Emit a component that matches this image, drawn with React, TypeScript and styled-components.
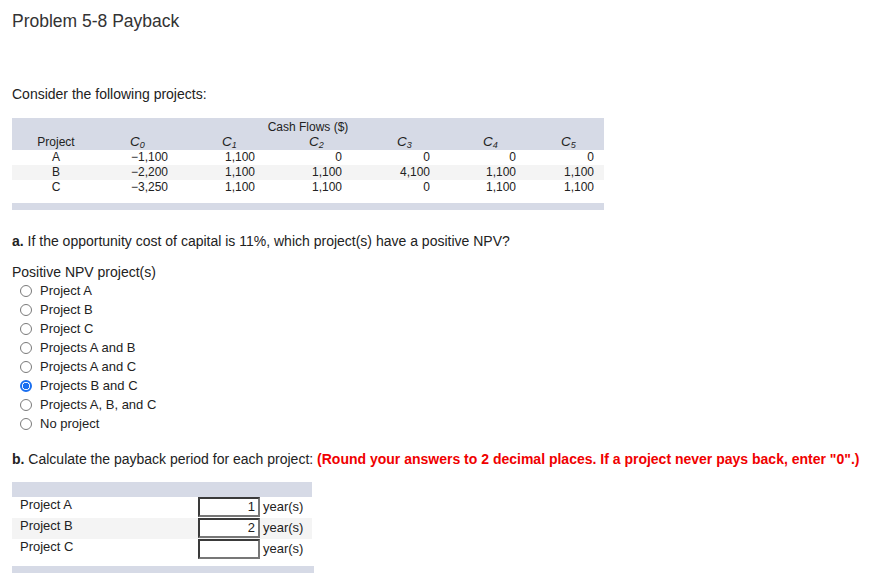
import React, { FC } from "react";
import styled, { createGlobalStyle } from "styled-components";

// Types
type Flow = { project: string; values: string[] };

// Local Data
const flows: Flow[] = [
  { project: "A", values: ["\u22121,100", "1,100", "0", "0", "0", "0"] },
  { project: "B", values: ["\u22122,200", "1,100", "1,100", "4,100", "1,100", "1,100"] },
  { project: "C", values: ["\u22123,250", "1,100", "1,100", "0", "1,100", "1,100"] },
];

const options = [
  "Project A",
  "Project B",
  "Project C",
  "Projects A and B",
  "Projects A and C",
  "Projects B and C",
  "Projects A, B, and C",
  "No project",
];

const paybacks = [
  { label: "Project A", value: "1" },
  { label: "Project B", value: "2" },
  { label: "Project C", value: "" },
];

const App: FC = () => {
  return (
    <Page>
      <GlobalStyle />
      <Title>Problem 5-8 Payback</Title>
      <Intro>Consider the following projects:</Intro>

      <FlowTable>
        <BandCell $span>Cash Flows ($)</BandCell>
        <BandCell $center>Project</BandCell>
        {[0, 1, 2, 3, 4, 5].map((n) => (
          <BandCell key={n}>
            <HeadInner $wide={n === 0}>
              <i>C</i>
              <Sub>{n}</Sub>
            </HeadInner>
          </BandCell>
        ))}
        <BandCell />
        {flows.map((row, i) => (
          <React.Fragment key={row.project}>
            <DataCell $center $shade={i === 1}>
              {row.project}
            </DataCell>
            {row.values.map((v, j) => (
              <DataCell key={j} $shade={i === 1}>
                {v}
              </DataCell>
            ))}
            <DataCell $shade={i === 1} />
          </React.Fragment>
        ))}
      </FlowTable>
      <Bar $width={592} $gap={8} />

      <Question>
        <b>a.</b> If the opportunity cost of capital is 11%, which project(s) have a positive NPV?
      </Question>

      <GroupLabel>Positive NPV project(s)</GroupLabel>
      <RadioList>
        {options.map((o) => (
          <RadioRow key={o}>
            <Radio $checked={o === "Projects B and C"} />
            {o}
          </RadioRow>
        ))}
      </RadioList>

      <Question $top={18}>
        <b>b.</b> Calculate the payback period for each project:{" "}
        <Warn>(Round your answers to 2 decimal places. If a project never pays back, enter "0".)</Warn>
      </Question>

      <PaybackTable>
        <PaybackHead />
        {paybacks.map((p, i) => (
          <PaybackRow key={p.label} $shade={i === 1}>
            <PaybackLabel>{p.label}</PaybackLabel>
            <AnswerBox>{p.value}</AnswerBox>
            <Unit>year(s)</Unit>
          </PaybackRow>
        ))}
      </PaybackTable>
      <Bar $width={302} $gap={6} />
    </Page>
  );
};

// Styled component import
const GlobalStyle = createGlobalStyle`
  body {
    margin: 0;
    background: #fff;
    font-family: "Liberation Sans", Arial, sans-serif;
    color: #222;
  }
`;

const Page = styled.div`
  padding: 11px 12px 0 12px;
`;

const Title = styled.h1`
  margin: 0;
  font-size: 17.5px;
  font-weight: normal;
  line-height: 20px;
  color: #333;
`;

const Intro = styled.p`
  margin: 53px 0 0 0;
  font-size: 14px;
  line-height: 20px;
`;

const FlowTable = styled.div`
  margin-top: 14px;
  width: 592px;
  display: grid;
  grid-template-columns: 88px 68px 87px 87px 88px 86px 78px 10px;
  font-size: 12px;
`;

const BandCell = styled.div<{ $span?: boolean; $center?: boolean }>`
  background: #d6dae6;
  height: 16px;
  line-height: 16px;
  text-align: ${(p) => (p.$span || p.$center ? "center" : "right")};
  grid-column: ${(p) => (p.$span ? "1 / -1" : "auto")};
  padding-top: ${(p) => (p.$span ? "1px" : "0")};
  box-sizing: border-box;
  overflow: hidden;
`;

const HeadInner = styled.span<{ $wide: boolean }>`
  display: inline-block;
  width: ${(p) => (p.$wide ? "38px" : "33px")};
  text-align: left;
  font-size: 13.5px;
  line-height: 14px;
  i {
    font-style: italic;
  }
`;

const Sub = styled.sub`
  font-size: 9px;
  font-style: italic;
  vertical-align: -2px;
  line-height: 0;
`;

const DataCell = styled.div<{ $center?: boolean; $shade?: boolean }>`
  height: 15px;
  line-height: 15px;
  text-align: ${(p) => (p.$center ? "center" : "right")};
  background: ${(p) => (p.$shade ? "#f4f4f4" : "#fff")};
`;

const Bar = styled.div<{ $width: number; $gap: number }>`
  width: ${(p) => p.$width}px;
  height: 7px;
  margin-top: ${(p) => p.$gap}px;
  background: #d6dae6;
`;

const Question = styled.p<{ $top?: number }>`
  margin: ${(p) => p.$top ?? 23}px 0 0 0;
  font-size: 14px;
  line-height: 16px;
  b {
    font-weight: bold;
  }
`;

const Warn = styled.b`
  color: #f00000;
`;

const GroupLabel = styled.p`
  margin: 15px 0 0 0;
  font-size: 14px;
  line-height: 16px;
`;

const RadioList = styled.div`
  margin-top: 1px;
  display: flex;
  flex-direction: column;
`;

const RadioRow = styled.label`
  display: flex;
  align-items: center;
  gap: 8px;
  height: 19px;
  padding-left: 8px;
  font-size: 13px;
`;

const Radio = styled.span<{ $checked: boolean }>`
  width: 12px;
  height: 12px;
  border-radius: 50%;
  box-sizing: border-box;
  border: ${(p) => (p.$checked ? "2px solid #1a6ff0" : "1px solid #7a7a7a")};
  background: ${(p) =>
    p.$checked ? "radial-gradient(circle, #1a6ff0 0 3px, #fff 3.5px)" : "#fff"};
`;

const PaybackTable = styled.div`
  margin-top: 15px;
  width: 300px;
  display: flex;
  flex-direction: column;
`;

const PaybackHead = styled.div`
  height: 15px;
  background: #d6dae6;
`;

const PaybackRow = styled.div<{ $shade: boolean }>`
  display: flex;
  align-items: flex-start;
  height: 21px;
  background: ${(p) => (p.$shade ? "#f4f4f4" : "#fff")};
  font-size: 13px;
`;

const PaybackLabel = styled.span`
  width: 178px;
  padding-left: 8px;
  line-height: 16px;
`;

const AnswerBox = styled.span`
  width: 62px;
  height: 20px;
  box-sizing: border-box;
  border: 2px solid #3a3a3a;
  border-right-color: #777;
  border-bottom-color: #777;
  background: #fff;
  text-align: right;
  padding-right: 3px;
  line-height: 16px;
  font-size: 13px;
`;

const Unit = styled.span`
  margin-left: 3px;
  line-height: 20px;
`;

export default App;
